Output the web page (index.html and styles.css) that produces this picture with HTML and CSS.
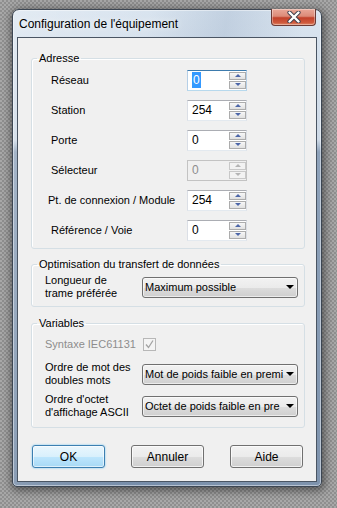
FILE: index.html
```html
<!DOCTYPE html>
<html lang="fr">
<head>
  <meta charset="UTF-8">
  <meta name="viewport" content="width=device-width, initial-scale=1.0">
  <title>Configuration de l'équipement</title>
  <link rel="stylesheet" href="styles.css">
</head>
<body>
  <div class="window">
    <div class="titlebar">
      <span class="title">Configuration de l'équipement</span>
      <div class="close-btn">
        <svg width="14" height="12" viewBox="0 0 14 12">
          <path d="M2.5 1.5 L11.5 10.5 M11.5 1.5 L2.5 10.5" stroke="#3d3d4a" stroke-width="4.2" stroke-linecap="round"/>
          <path d="M2.5 1.5 L11.5 10.5 M11.5 1.5 L2.5 10.5" stroke="#ffffff" stroke-width="2.4" stroke-linecap="round"/>
        </svg>
      </div>
    </div>

    <div class="client">
      <fieldset class="group group-address">
        <legend>Adresse</legend>
        <div class="field-row">
          <span class="label">Réseau</span>
          <div class="spin focused">
            <span class="spin-value"><span class="selected">0</span></span>
            <div class="spin-buttons">
              <div class="spin-btn"><span class="arrow-up"></span></div>
              <div class="spin-btn"><span class="arrow-down"></span></div>
            </div>
          </div>
        </div>
        <div class="field-row">
          <span class="label">Station</span>
          <div class="spin">
            <span class="spin-value">254</span>
            <div class="spin-buttons">
              <div class="spin-btn"><span class="arrow-up"></span></div>
              <div class="spin-btn"><span class="arrow-down"></span></div>
            </div>
          </div>
        </div>
        <div class="field-row">
          <span class="label">Porte</span>
          <div class="spin">
            <span class="spin-value">0</span>
            <div class="spin-buttons">
              <div class="spin-btn"><span class="arrow-up"></span></div>
              <div class="spin-btn"><span class="arrow-down"></span></div>
            </div>
          </div>
        </div>
        <div class="field-row">
          <span class="label">Sélecteur</span>
          <div class="spin disabled">
            <span class="spin-value">0</span>
            <div class="spin-buttons">
              <div class="spin-btn"><span class="arrow-up"></span></div>
              <div class="spin-btn"><span class="arrow-down"></span></div>
            </div>
          </div>
        </div>
        <div class="field-row">
          <span class="label label-wide">Pt. de connexion / Module</span>
          <div class="spin">
            <span class="spin-value">254</span>
            <div class="spin-buttons">
              <div class="spin-btn"><span class="arrow-up"></span></div>
              <div class="spin-btn"><span class="arrow-down"></span></div>
            </div>
          </div>
        </div>
        <div class="field-row">
          <span class="label">Référence / Voie</span>
          <div class="spin">
            <span class="spin-value">0</span>
            <div class="spin-buttons">
              <div class="spin-btn"><span class="arrow-up"></span></div>
              <div class="spin-btn"><span class="arrow-down"></span></div>
            </div>
          </div>
        </div>
      </fieldset>

      <fieldset class="group group-transfer">
        <legend>Optimisation du transfert de données</legend>
        <div class="combo-row">
          <span class="label-2">Longueur de<br>trame préférée</span>
          <div class="combo">
            <span class="combo-text">Maximum possible</span>
            <span class="combo-arrow"></span>
          </div>
        </div>
      </fieldset>

      <fieldset class="group group-vars">
        <legend>Variables</legend>
        <div class="check-row">
          <span class="label-2 muted">Syntaxe IEC61131</span>
          <span class="checkbox">
            <svg width="11" height="11" viewBox="0 0 11 11">
              <path d="M2 5.5 L4.5 8.5 L9 1.5" fill="none" stroke="#a3a3a3" stroke-width="1.3"/>
            </svg>
          </span>
        </div>
        <div class="combo-row">
          <span class="label-2">Ordre de mot des<br>doubles mots</span>
          <div class="combo">
            <span class="combo-text">Mot de poids faible en premi</span>
            <span class="combo-arrow"></span>
          </div>
        </div>
        <div class="combo-row">
          <span class="label-2">Ordre d'octet<br>d'affichage ASCII</span>
          <div class="combo">
            <span class="combo-text">Octet de poids faible en pre</span>
            <span class="combo-arrow"></span>
          </div>
        </div>
      </fieldset>

      <div class="buttons">
        <div class="btn btn-default">OK</div>
        <div class="btn">Annuler</div>
        <div class="btn">Aide</div>
      </div>
    </div>
  </div>
</body>
</html>
```

FILE: styles.css
```css
html, body {
  margin: 0;
  height: 100%;
}

body {
  background: repeating-conic-gradient(#8f8f8f 0 25%, #a8a8a8 0 50%) 0 0 / 4px 4px;
  padding: 9px 0 0 12px;
  box-sizing: border-box;
  font-family: "Liberation Sans", Arial, sans-serif;
}

.window {
  width: 310px;
  height: 478px;
  box-sizing: border-box;
  border: 1px solid #3c4653;
  border-radius: 7px 7px 5px 5px;
  background:
    linear-gradient(100deg, rgba(255,255,255,0.25) 0%, rgba(255,255,255,0) 35%, rgba(90,120,160,0.18) 55%, rgba(255,255,255,0) 75%),
    linear-gradient(180deg, #d9e4ef 0, #cdd9e6 130px, #8ea2ba 142px, #7e93ad 100%);
  box-shadow: 1px 2px 9px 2px rgba(0, 0, 0, 0.45), inset 0 0 0 1px rgba(255, 255, 255, 0.45);
}

.titlebar {
  height: 27px;
  display: flex;
  justify-content: space-between;
  align-items: center;
}

.title {
  padding-left: 6px;
  font-size: 12px;
  color: #000;
  text-shadow: 0 0 6px rgba(255, 255, 255, 0.9);
}

.close-btn {
  align-self: flex-start;
  margin-top: -1px;
  margin-right: 5px;
  width: 45px;
  height: 17px;
  box-sizing: border-box;
  border: 1px solid #6b3a35;
  border-top: none;
  border-radius: 0 0 4px 4px;
  background: linear-gradient(180deg, #e9a898 0%, #dc8b78 45%, #c2412a 55%, #cf5a3d 85%, #e08a6a 100%);
  display: flex;
  justify-content: center;
  align-items: center;
  box-shadow: inset 0 0 0 1px rgba(255, 255, 255, 0.35);
}

.client {
  margin: 0 4px 4px 4px;
  height: 445px;
  box-sizing: border-box;
  border: 1px solid #4a5563;
  background-color: #f0f0f0;
  padding: 13px 0 0 0;
  font-size: 11px;
  color: #000;
}

.group {
  margin: 0 11px 0 13px;
  padding: 0;
  border: 1px solid #d5dfe5;
  border-radius: 3px;
  box-shadow: inset 1px 1px 0 #fff;
}

.group legend {
  margin-left: 5px;
  padding: 0 2px;
  line-height: 14px;
}

.group-address {
  padding-bottom: 3px;
}

.group-transfer {
  margin-top: 8px;
  padding: 3px 0 6px;
}

.group-vars {
  margin-top: 9px;
  padding-bottom: 5px;
}

.field-row {
  height: 30px;
  display: flex;
  align-items: center;
  padding-left: 19px;
}

.label {
  width: 136px;
}

.label-wide {
  margin-left: -3px;
  width: 139px;
}

/* spin box */
.spin {
  width: 60px;
  height: 21px;
  box-sizing: border-box;
  display: flex;
  background: #fff;
  border: 1px solid #dbdfe6;
  border-top-color: #abadb3;
  border-bottom-color: #e3e9ef;
}

.spin.focused {
  border-color: #b5cfe7;
  border-top-color: #3d7bad;
  border-bottom-color: #b7d9ed;
}

.spin.disabled {
  background: #f0f0f0;
  border-color: #c3c3c3;
  color: #8d8d8d;
}

.spin-value {
  flex: 1;
  padding-left: 4px;
  line-height: 19px;
  font-size: 12px;
}

.selected {
  background: #3399ff;
  color: #fff;
  padding: 1px 1px;
}

.spin-buttons {
  width: 17px;
  display: flex;
  flex-direction: column;
  gap: 1px;
  margin: 1px 0;
}

.spin-btn {
  flex: 1;
  border: 1px solid #acacac;
  background: linear-gradient(180deg, #f7f7f7, #e1e1e1);
  display: flex;
  justify-content: center;
  align-items: center;
}

.arrow-up, .arrow-down {
  width: 0;
  height: 0;
  border-left: 3px solid transparent;
  border-right: 3px solid transparent;
}

.arrow-up {
  border-bottom: 3px solid #4d66a8;
}

.arrow-down {
  border-top: 3px solid #4d66a8;
}

.disabled .spin-btn {
  border-color: #c8c8c8;
  background: #f2f2f2;
}

.disabled .arrow-up {
  border-bottom-color: #b4b4b4;
}

.disabled .arrow-down {
  border-top-color: #b4b4b4;
}

/* combo rows */
.combo-row {
  display: flex;
  align-items: center;
  padding-left: 13px;
  height: 32px;
}

.group-transfer .combo-row {
  height: 26px;
}

.label-2 {
  width: 97px;
  line-height: 13px;
}

.muted {
  color: #8d8d8d;
}

.check-row {
  display: flex;
  align-items: center;
  padding-left: 13px;
  height: 28px;
}

.checkbox {
  width: 13px;
  height: 13px;
  margin-left: 1px;
  box-sizing: border-box;
  border: 1px solid #b7b7b7;
  background: #f4f4f4;
  display: flex;
  justify-content: center;
  align-items: center;
}

.combo {
  width: 156px;
  height: 21px;
  box-sizing: border-box;
  border: 1px solid #707070;
  border-radius: 3px;
  background: linear-gradient(180deg, #f2f2f2 0%, #ebebeb 50%, #dddddd 51%, #cfcfcf 100%);
  box-shadow: inset 0 0 0 1px rgba(255, 255, 255, 0.6);
  display: flex;
  align-items: center;
  padding-left: 2px;
}

.combo-text {
  white-space: nowrap;
}

.combo-arrow {
  margin-left: auto;
  margin-right: 3px;
  width: 0;
  height: 0;
  border-left: 4px solid transparent;
  border-right: 4px solid transparent;
  border-top: 4px solid #000;
}

/* bottom buttons */
.buttons {
  display: flex;
  gap: 26px;
  padding-left: 14px;
  margin-top: 17px;
}

.btn {
  width: 73px;
  height: 23px;
  box-sizing: border-box;
  border: 1px solid #707070;
  border-radius: 3px;
  background: linear-gradient(180deg, #f2f2f2 0%, #ebebeb 50%, #dddddd 51%, #cfcfcf 100%);
  box-shadow: inset 0 0 0 1px rgba(255, 255, 255, 0.7);
  display: flex;
  justify-content: center;
  align-items: center;
  font-size: 12px;
}

.btn-default {
  border-color: #3c7fb1;
  background: linear-gradient(180deg, #eaf6fd 0%, #d9f0fc 50%, #bee6fd 51%, #a7d9f5 100%);
  box-shadow: inset 0 0 0 1px rgba(255, 255, 255, 0.6), 0 0 2px #63c3f4;
}
```
